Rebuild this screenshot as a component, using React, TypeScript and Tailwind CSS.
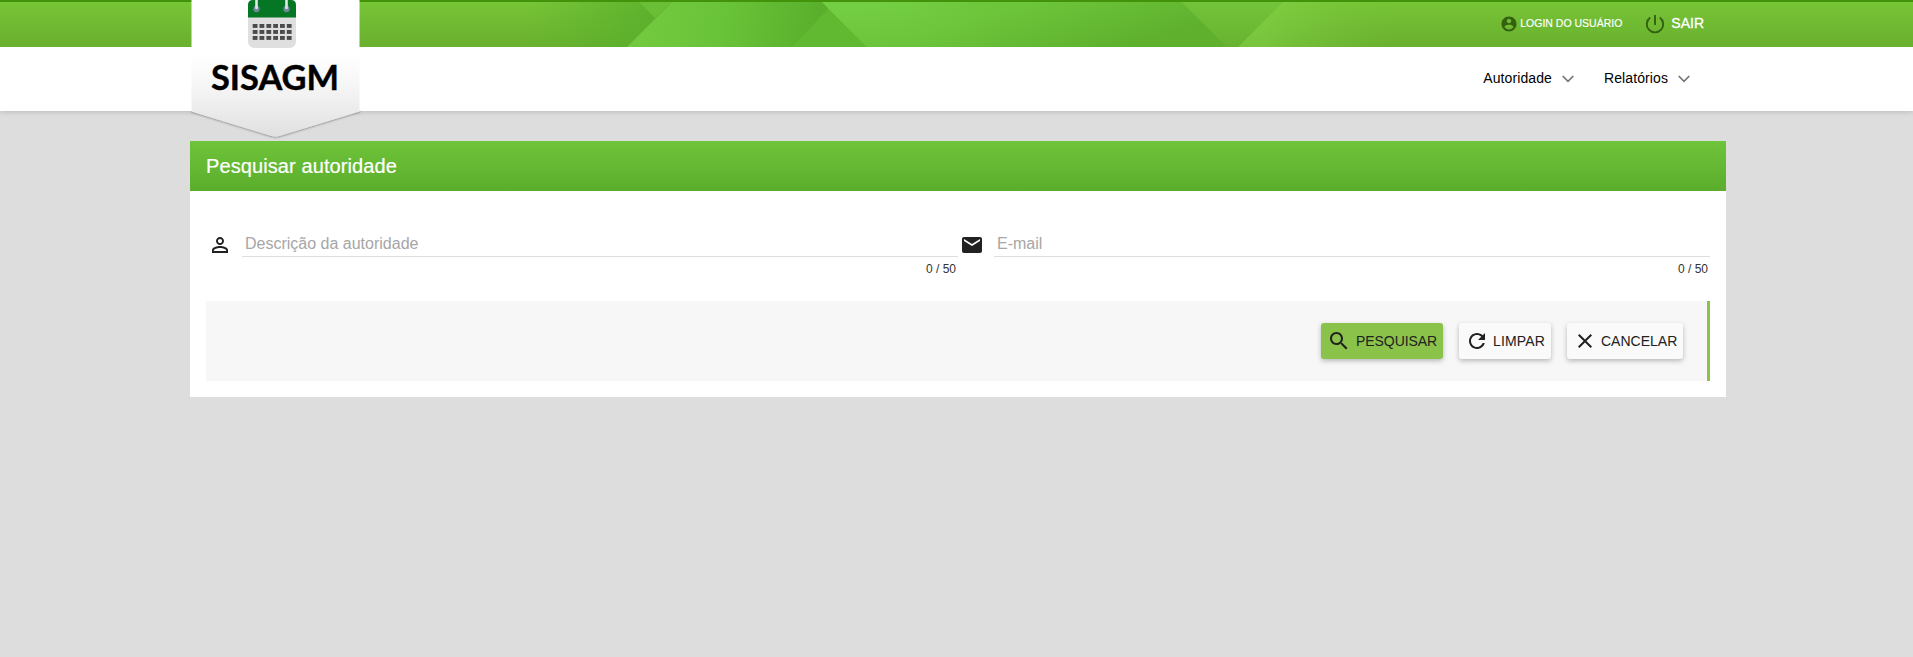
import type { ReactNode } from "react";

type IconProps = { d: string; className: string };

function Icon({ d, className }: IconProps) {
  return (
    <svg viewBox="0 0 24 24" fill="currentColor" className={className} aria-hidden="true">
      <path d={d} />
    </svg>
  );
}

const icons = {
  account:
    "M12 2C6.48 2 2 6.48 2 12s4.48 10 10 10 10-4.480 10-10S17.520 2 12 2zm0 3c1.660 0 3 1.340 3 3s-1.340 3-3 3-3-1.340-3-3 1.340-3 3-3zm0 14.200c-2.500 0-4.710-1.280-6-3.220.030-1.990 4-3.080 6-3.080 1.990 0 5.970 1.090 6 3.080-1.290 1.940-3.500 3.220-6 3.220z",
  person:
    "M12 5.900c1.160 0 2.100.940 2.100 2.100s-.940 2.100-2.100 2.100S9.900 9.160 9.900 8s.940-2.100 2.100-2.100m0 9c2.970 0 6.100 1.460 6.100 2.100v1.100H5.900V17c0-.640 3.130-2.100 6.100-2.100M12 4C9.790 4 8 5.790 8 8s1.790 4 4 4 4-1.790 4-4-1.790-4-4-4zm0 9c-2.670 0-8 1.340-8 4v3h16v-3c0-2.660-5.330-4-8-4z",
  mail: "M20 4H4c-1.100 0-1.990.900-1.990 2L2 18c0 1.100.900 2 2 2h16c1.100 0 2-.900 2-2V6c0-1.100-.900-2-2-2zm0 4l-8 5-8-5V6l8 5 8-5v2z",
  search:
    "M15.500 14h-.790l-.280-.270C15.410 12.590 16 11.110 16 9.500 16 5.910 13.090 3 9.500 3S3 5.910 3 9.500 5.910 16 9.500 16c1.610 0 3.090-.590 4.230-1.570l.270.280v.790l5 4.990L20.490 19l-4.990-5zm-6 0C7.010 14 5 11.990 5 9.500S7.010 5 9.500 5 14 7.010 14 9.500 11.990 14 9.500 14z",
  refresh:
    "M17.650 6.350C16.200 4.900 14.210 4 12 4c-4.420 0-7.990 3.580-7.990 8s3.570 8 7.990 8c3.730 0 6.840-2.550 7.730-6h-2.080c-.820 2.330-3.040 4-5.650 4-3.310 0-6-2.690-6-6s2.690-6 6-6c1.660 0 3.140.690 4.220 1.780L13 11h7V4l-2.350 2.350z",
  close:
    "M19 6.410L17.590 5 12 10.590 6.410 5 5 6.410 10.590 12 5 17.590 6.410 19 12 13.410 17.590 19 19 17.590 13.410 12z",
};

function BannerArt() {
  return (
    <svg className="absolute inset-0 h-full w-full" viewBox="0 0 1913 47" preserveAspectRatio="none" aria-hidden="true">
      <defs>
        <linearGradient id="base" x1="0" y1="0" x2="0" y2="1">
          <stop offset="0" stopColor="#78c537" />
          <stop offset="1" stopColor="#69b02e" />
        </linearGradient>
        <linearGradient id="leftShade" gradientUnits="userSpaceOnUse" x1="530" y1="0" x2="665" y2="30">
          <stop offset="0" stopColor="#5db42d" stopOpacity="0" />
          <stop offset="1" stopColor="#59ae2b" />
        </linearGradient>
        <linearGradient id="facetA" gradientUnits="userSpaceOnUse" x1="650" y1="10" x2="810" y2="45">
          <stop offset="0" stopColor="#72c93e" />
          <stop offset="0.45" stopColor="#69c338" />
          <stop offset="1" stopColor="#5ab02c" />
        </linearGradient>
        <linearGradient id="facetB" gradientUnits="userSpaceOnUse" x1="900" y1="0" x2="908" y2="60">
          <stop offset="0" stopColor="#74ce43" />
          <stop offset="1" stopColor="#69c038" />
        </linearGradient>
        <linearGradient id="facetC" gradientUnits="userSpaceOnUse" x1="1060" y1="-5" x2="1078" y2="60">
          <stop offset="0" stopColor="#6dc53a" />
          <stop offset="1" stopColor="#5eb02d" />
        </linearGradient>
        <linearGradient id="facetD" gradientUnits="userSpaceOnUse" x1="1262" y1="0" x2="1400" y2="0">
          <stop offset="0" stopColor="#85d549" stopOpacity="0.550" />
          <stop offset="1" stopColor="#75c238" stopOpacity="0" />
        </linearGradient>
        <linearGradient id="fadeB" gradientUnits="userSpaceOnUse" x1="900" y1="0" x2="1010" y2="0">
          <stop offset="0" stopColor="#fff" />
          <stop offset="1" stopColor="#000" />
        </linearGradient>
        <mask id="maskB" maskUnits="userSpaceOnUse" x="800" y="0" width="230" height="47">
          <rect x="800" y="0" width="230" height="47" fill="url(#fadeB)" />
        </mask>
        <linearGradient id="facetV" x1="0" y1="0" x2="0" y2="1">
          <stop offset="0" stopColor="#74c43a" />
          <stop offset="1" stopColor="#67b231" />
        </linearGradient>
      </defs>
      <rect width="1913" height="47" fill="url(#base)" />
      <path d="M500 0H675L628 47H500z" fill="url(#leftShade)" />
      <path d="M637 0H674L655 18z" fill="#6bbf37" />
      <path d="M674 0H821L829 9L792 47H627z" fill="url(#facetA)" />
      <path d="M829 9L867 47H792z" fill="#61b932" />
      <path d="M820 0H1180L1227 47H867z" fill="url(#facetC)" />
      <path d="M820 0H1020V47H867z" fill="url(#facetB)" mask="url(#maskB)" />
      <path d="M1180 0H1285L1238 47H1227z" fill="url(#facetV)" />
      <path d="M1285 0H1400V47H1238z" fill="url(#facetD)" />
      <rect width="1913" height="2" fill="#42920a" />
    </svg>
  );
}

function Logo() {
  const columns = [252.7, 259.5, 266.4, 273.2, 280, 286.8];
  const rows = [24, 30, 36];
  return (
    <div className="absolute top-0 left-0 z-10 h-[141px] w-[172px]">
      <svg className="absolute inset-0" width="172" height="141" viewBox="190 0 172 141">
        <defs>
          <linearGradient id="badge" gradientUnits="userSpaceOnUse" x1="0" y1="55" x2="0" y2="137">
            <stop offset="0" stopColor="#ffffff" />
            <stop offset="0.4" stopColor="#f5f5f5" />
            <stop offset="1" stopColor="#e0e0e0" />
          </linearGradient>
          <filter id="badgeShadow" x="-10%" y="-10%" width="120%" height="120%">
            <feDropShadow dx="0" dy="0.500" stdDeviation="0.900" floodColor="#000" floodOpacity="0.500" />
          </filter>
          <clipPath id="lower">
            <rect x="188" y="111" width="176" height="30" />
          </clipPath>
        </defs>
        <g clipPath="url(#lower)">
          <path d="M191.500 0H359.500V111.500L281 135.500Q275.500 137.500 270 135.500L191.500 111.500z" fill="#ddd" filter="url(#badgeShadow)" />
        </g>
        <path d="M191.500 0H359.500V111.500L281 135.500Q275.500 137.500 270 135.500L191.500 111.500z" fill="url(#badge)" />
        <path d="M248 17H296V41Q296 48 289 48H255Q248 48 248 41z" fill="#dfdfdf" />
        <path d="M248 17.500V5Q248 0 253 0H291Q296 0 296 5V17.500z" fill="#057624" />
        {rows.map((y) => columns.map((x) => <rect key={`${x}-${y}`} x={x} y={y} width="4.800" height="3.900" fill="#4b4b4b" />))}
        <circle cx="256.500" cy="9" r="3.200" fill="#6f8798" />
        <circle cx="286.500" cy="9" r="3.200" fill="#6f8798" />
        <path d="M256.500 0V8M286.500 0V8" stroke="#e4e8ea" strokeWidth="2.600" strokeLinecap="round" />
        <text
          x="211"
          y="89.500"
          textLength="128"
          lengthAdjust="spacingAndGlyphs"
          className="fill-black stroke-black stroke-[0.4px] font-['Lato','Open_Sans',sans-serif] text-[34px] font-bold"
        >
          SISAGM
        </text>
      </svg>
    </div>
  );
}

function MenuItem({ label }: { label: string }) {
  return (
    <a className="flex items-center gap-[10px] tracking-[0.1px]">
      <span>{label}</span>
      <svg width="12" height="8" viewBox="0 0 12 8" fill="none" stroke="#757575" strokeWidth="1.700" aria-hidden="true">
        <path d="M0.700 1L6 6.300L11.300 1" />
      </svg>
    </a>
  );
}

function Field({ icon, placeholder }: { icon: string; placeholder: string }) {
  return (
    <div className="flex flex-1">
      <div className="w-9 pt-[42px] pl-[2px]">
        <Icon d={icon} className="h-6 w-6 text-[#212121]" />
      </div>
      <div className="flex-1 pt-[36px]">
        <div className="h-[30px] border-b border-[#dedede] pl-[3px] text-[16px] leading-[34px] text-[#a6a6a6]">{placeholder}</div>
        <div className="pt-[5px] pr-[2px] text-right text-[12px] leading-[15px] text-[#333]">0 / 50</div>
      </div>
    </div>
  );
}

function Button({ icon, className, children }: { icon: string; className: string; children: ReactNode }) {
  return (
    <button
      className={`flex h-9 items-center rounded-[3px] pl-[6px] text-[14px] text-[#212121] shadow-[0_2px_5px_0_rgba(0,0,0,0.26)] ${className}`}
    >
      <Icon d={icon} className="h-6 w-6 shrink-0" />
      {children}
    </button>
  );
}

export default function App() {
  return (
    <div className="min-h-screen bg-[#ddd] font-['Liberation_Sans',Arial,sans-serif]">
      <header className="relative h-[111px] bg-white shadow-[0_1px_5px_rgba(0,0,0,0.16)]">
        <div className="relative h-[47px]">
          <BannerArt />
          <div className="relative ml-[190px] flex h-full w-[1536px] items-center justify-end pr-[22px] text-white">
            <Icon d={icons.account} className="mr-[2px] h-[18px] w-[18px] text-[#34610f]" />
            <span className="text-[10.5px] [-webkit-text-stroke:0.15px_white]">LOGIN DO USUÁRIO</span>
            <svg className="mr-[6px] ml-[23px]" width="20" height="20" viewBox="0 0 20 20" fill="none" stroke="#34610f" strokeWidth="1.900" aria-hidden="true">
              <path d="M5.200 3.500A8.200 8.200 0 1 0 14.800 3.500M10 1V11" />
            </svg>
            <span className="text-[14px] [-webkit-text-stroke:0.3px_white]">SAIR</span>
          </div>
        </div>
        <nav className="ml-[190px] flex h-[63px] w-[1536px] items-center justify-end gap-[30px] pr-[36px] text-[14px] text-black">
          <MenuItem label="Autoridade" />
          <MenuItem label="Relatórios" />
        </nav>
        <div className="absolute top-0 left-[190px]">
          <Logo />
        </div>
      </header>

      <main className="mt-[30px] ml-[190px] w-[1536px] bg-white">
        <h1 className="flex h-[50px] items-center bg-linear-to-b from-[#6ec43a] to-[#5bad2b] pl-4 text-[20px] tracking-[0.1px] text-white [-webkit-text-stroke:0.2px_white]">
          Pesquisar autoridade
        </h1>
        <div className="px-4 pb-4">
          <div className="flex h-[110px]">
            <Field icon={icons.person} placeholder="Descrição da autoridade" />
            <Field icon={icons.mail} placeholder="E-mail" />
          </div>
          <div className="flex h-20 items-center justify-end gap-4 border-r-[3px] border-[#8bc34a] bg-[#f7f7f7] pr-6">
            <Button icon={icons.search} className="w-[122px] gap-[5px] bg-[#8bc34a] tracking-[-0.06px]">PESQUISAR</Button>
            <Button icon={icons.refresh} className="w-[92px] gap-[4px] bg-[#fafafa] tracking-[0.14px]">LIMPAR</Button>
            <Button icon={icons.close} className="w-[116px] gap-[4px] bg-[#fafafa]">CANCELAR</Button>
          </div>
        </div>
      </main>
    </div>
  );
}
